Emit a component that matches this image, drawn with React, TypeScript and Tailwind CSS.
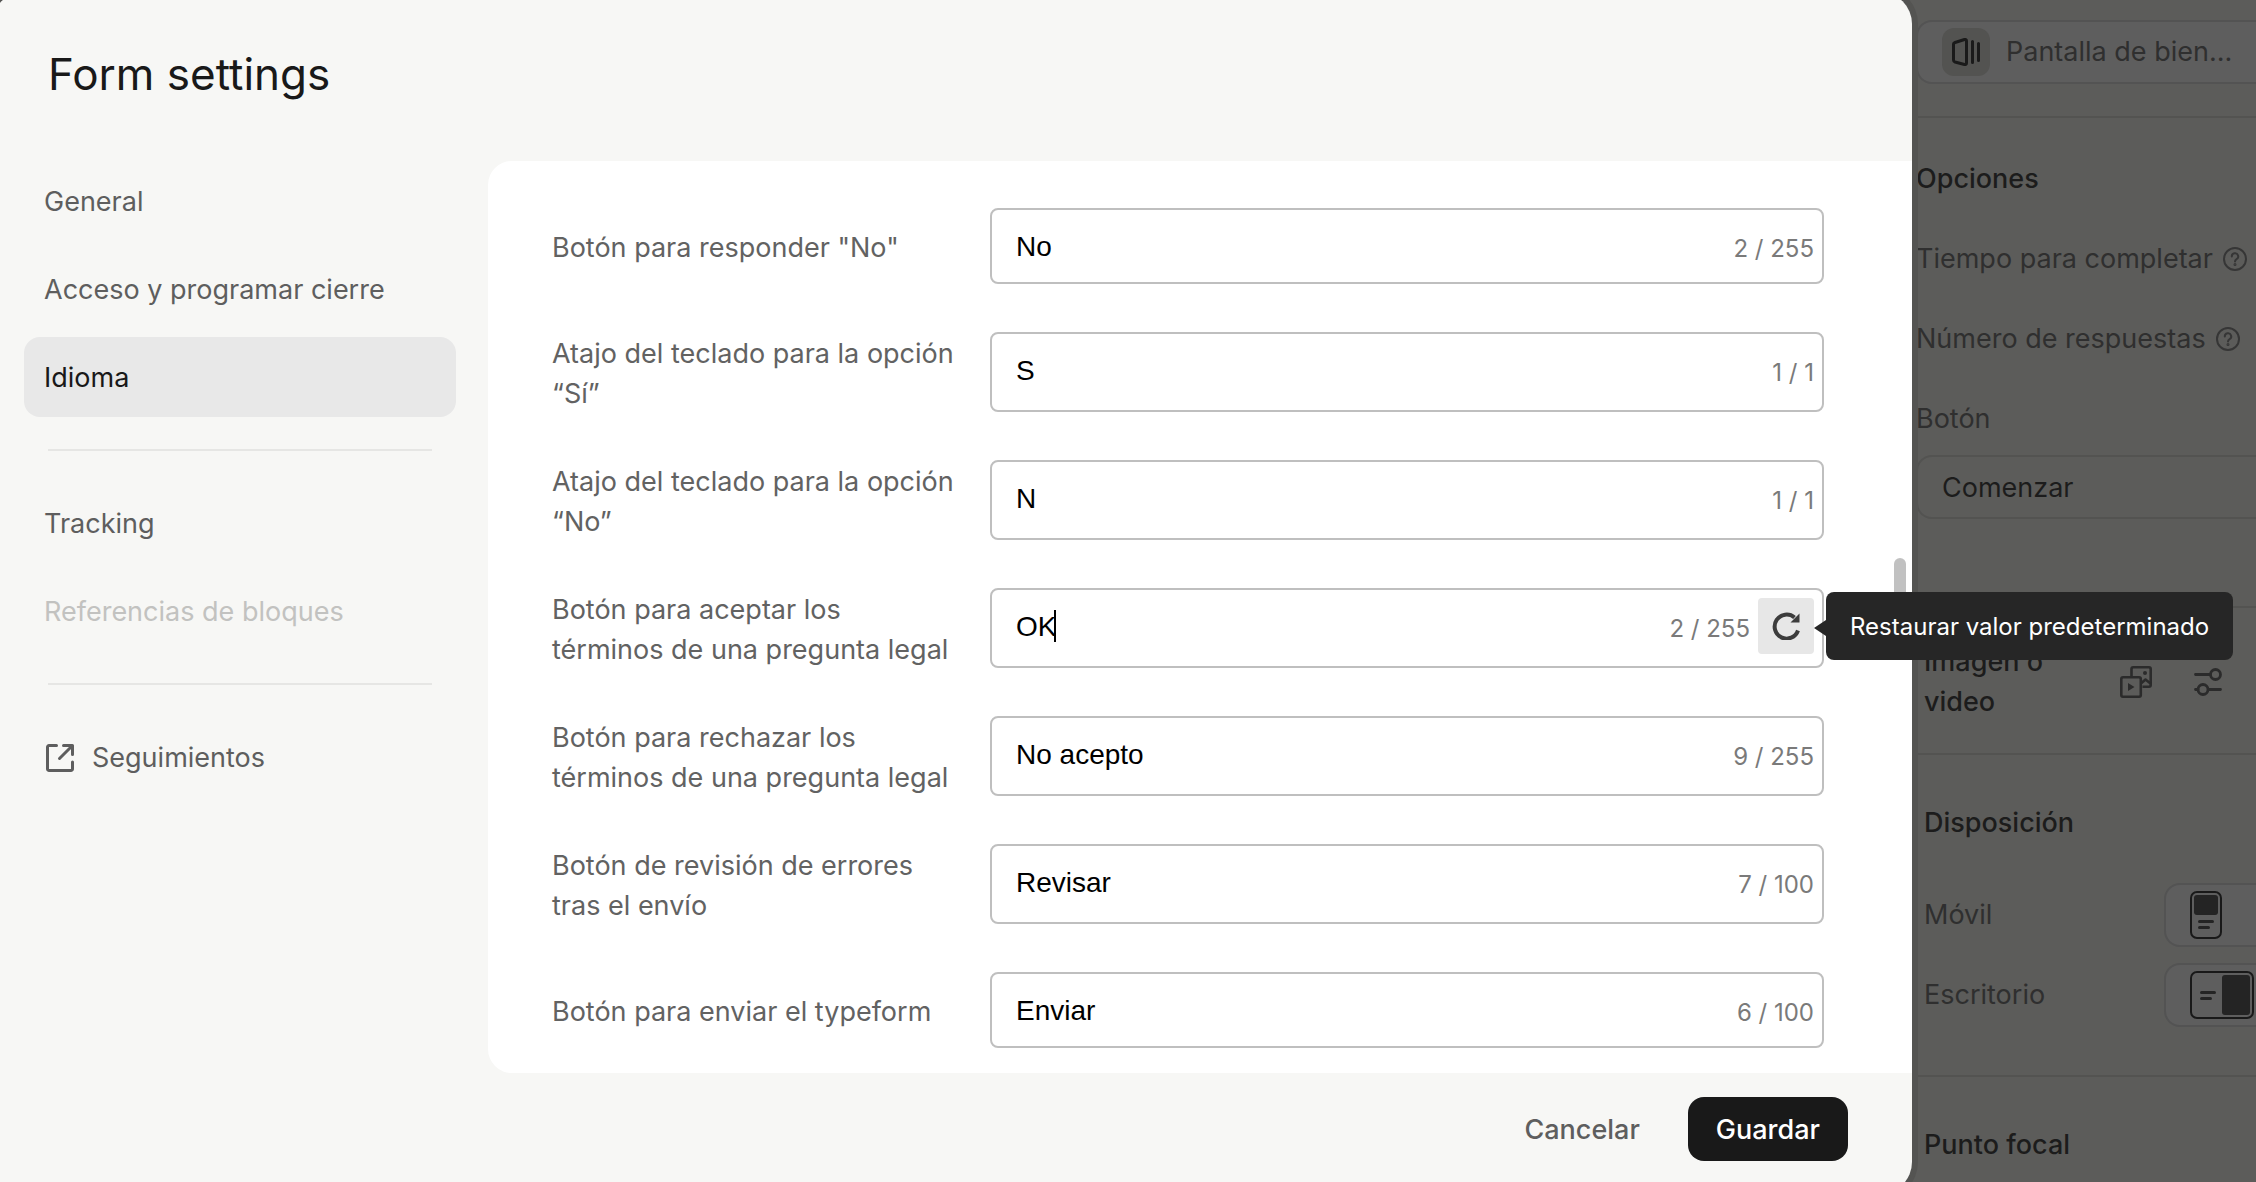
import { useState } from "react"
import type { ReactNode } from "react"

interface Field {
  id: string
  label: string
  value: string
  max: number
  active?: boolean
}

const fields: Field[] = [
  { id: "no", label: 'Botón para responder "No"', value: "No", max: 255 },
  { id: "key-yes", label: "Atajo del teclado para la opción “Sí”", value: "S", max: 1 },
  { id: "key-no", label: "Atajo del teclado para la opción “No”", value: "N", max: 1 },
  {
    id: "legal-accept",
    label: "Botón para aceptar los términos de una pregunta legal",
    value: "OK",
    max: 255,
    active: true,
  },
  {
    id: "legal-reject",
    label: "Botón para rechazar los términos de una pregunta legal",
    value: "No acepto",
    max: 255,
  },
  { id: "review", label: "Botón de revisión de errores tras el envío", value: "Revisar", max: 100 },
  { id: "submit", label: "Botón para enviar el typeform", value: "Enviar", max: 100 },
]

function ExternalIcon() {
  return (
    <svg className="size-8" viewBox="-2 -2 32 32" fill="none" stroke="currentColor" strokeWidth="3" strokeLinecap="round" strokeLinejoin="round">
      <path d="M10.5 1.5H3A1.5 1.5 0 0 0 1.5 3v22A1.5 1.5 0 0 0 3 26.5h22a1.5 1.5 0 0 0 1.5-1.5v-7" />
      <path d="M17.5 1.5h9v9M26 2L13.5 14.5" />
    </svg>
  )
}

function ReloadIcon() {
  return (
    <svg className="size-7" viewBox="0 0 28 28" fill="none">
      <path d="M26 18.500A12 12 0 1 1 22.500 5.500" stroke="#3c3c3c" strokeWidth="4" />
      <path d="M27.500 1.500V10.500H18.500Z" fill="#3c3c3c" />
    </svg>
  )
}

function WelcomeIcon() {
  return (
    <svg className="size-7" viewBox="0 0 28 28" fill="none" stroke="#1a1a1a" strokeWidth="3" strokeLinecap="round" strokeLinejoin="round">
      <path d="M3 4.5L12.5 1.5Q14.5 1.2 14.5 3V25Q14.5 26.8 12.5 26.5L3 24Q1.5 23.5 1.5 22V6Q1.5 5 3 4.5Z" />
      <path d="M20.5 3.5v21M26.5 5.5v17" />
    </svg>
  )
}

function HelpIcon() {
  return (
    <svg className="size-6" viewBox="0 0 24 24" fill="none" stroke="#363636" strokeWidth="2" strokeLinecap="round">
      <circle cx="12" cy="12" r="11" />
      <path d="M8.8 9.5a3.2 3.2 0 1 1 4.8 2.7c-1 .6-1.6 1.1-1.6 2.3" />
      <circle cx="12" cy="17.5" r="0.5" fill="#363636" />
    </svg>
  )
}

function MediaIcon() {
  return (
    <svg className="size-8" viewBox="0 0 32 32" fill="none" stroke="#2b2b2b" strokeWidth="2.6" strokeLinejoin="round">
      <path d="M11.5 10V3A1.7 1.7 0 0 1 13.2 1.3H29A1.7 1.7 0 0 1 30.7 3V19A1.7 1.7 0 0 1 29 20.7H22.500" />
      <path d="M21.5 17L25.5 13.5L30.5 17.5" />
      <circle cx="25" cy="7" r="2" fill="#2b2b2b" stroke="none" />
      <rect x="1.3" y="11.3" width="19.5" height="19.4" rx="1.7" />
      <path d="M8 17V25L14.5 21Z" fill="#2b2b2b" stroke="none" />
    </svg>
  )
}

function SlidersIcon() {
  return (
    <svg className="size-7" viewBox="0 0 28 28" fill="none" stroke="#2b2b2b" strokeWidth="2.8" strokeLinecap="round">
      <path d="M1.5 6.5H16M1.5 21.5H4M14.5 21.5H26.5" />
      <circle cx="21.5" cy="6.5" r="5" />
      <circle cx="9" cy="21.5" r="5" />
    </svg>
  )
}

function MobileLayoutIcon() {
  return (
    <svg className="h-12 w-8" viewBox="0 0 32 48" fill="none">
      <rect x="1" y="1" width="30" height="46" rx="6" stroke="#191919" strokeWidth="2" />
      <rect x="4" y="4" width="24" height="20" rx="3" fill="#242424" />
      <path d="M9.5 30.5h13M9.5 36.5h9" stroke="#242424" strokeWidth="3" strokeLinecap="round" />
    </svg>
  )
}

function DesktopLayoutIcon() {
  return (
    <svg className="h-12 w-16" viewBox="0 0 64 48" fill="none">
      <rect x="1" y="1" width="62" height="46" rx="6" stroke="#191919" strokeWidth="2" />
      <rect x="32" y="4" width="28" height="40" rx="3" fill="#242424" />
      <path d="M11.5 21.5h13M11.5 27.5h9" stroke="#242424" strokeWidth="3" strokeLinecap="round" />
    </svg>
  )
}

function NavItem({ children, className = "text-[#5e5e5e]" }: { children: ReactNode; className?: string }) {
  return (
    <a href="#" className={`flex h-20 items-center gap-4 rounded-2xl px-5 pt-0.5 ${className}`}>
      {children}
    </a>
  )
}

function FieldRow({ field }: { field: Field }) {
  const [value, setValue] = useState(field.value)

  return (
    <div className="flex items-stretch">
      <label htmlFor={field.id} className="mr-[34px] flex w-[404px] shrink-0 items-center pt-0.5 -mb-0.5 text-[#626262]">
        <span>{field.label}</span>
      </label>
      <div className="relative flex min-h-[76px] flex-1 items-start rounded-lg border-2 border-[#bfbfbf] pr-2 pl-6">
        <input
          id={field.id}
          value={value}
          maxLength={field.max}
          onChange={(e) => setValue(e.target.value)}
          className={`h-[72px] min-w-0 bg-transparent pt-0.5 font-['Liberation_Sans',sans-serif] text-[28px] text-black outline-none ${
            field.active ? "field-sizing-content" : "flex-1"
          }`}
        />
        {field.active && <span className="mt-5 -ml-0.5 h-8 w-0.5 bg-black" />}
        <span className="ml-auto flex h-[72px] items-center pt-1.5 text-2xl text-[#7a7a7a]">
          {field.value.length} / {field.max}
        </span>
        {field.active && (
          <>
            <button
              type="button"
              aria-label="Restaurar"
              onClick={() => setValue(field.value)}
              className="mt-2 ml-2 flex size-14 items-center justify-center rounded-sm bg-[#e7e7e7]"
            >
              <ReloadIcon />
            </button>
            <div
              role="tooltip"
              className="absolute top-0.5 left-full z-10 ml-1 flex h-[68px] items-center rounded-lg bg-[#262626] px-6 pt-0.5 text-2xl whitespace-nowrap text-white"
            >
              <svg className="absolute top-[26px] right-full h-5 w-3" viewBox="0 0 12 20">
                <path d="M12 2V18L0 10Z" fill="#262626" />
              </svg>
              Restaurar valor predeterminado
            </div>
          </>
        )}
      </div>
    </div>
  )
}

function SettingsDialog() {
  return (
    <section
      role="dialog"
      aria-labelledby="dialog-title"
      className="relative z-10 -mt-2 -mb-3 -ml-2 flex min-w-0 flex-1 flex-col rounded-[32px] bg-[#f7f7f5] shadow-[0_0_0_6px_#545452]"
    >
      <header className="flex h-[169px] shrink-0 items-start px-14 pt-[50px]">
        <h1 id="dialog-title" className="text-[44px] leading-[64px] text-[#191919]">
          Form settings
        </h1>
      </header>
      <div className="flex min-h-0 flex-1">
        <nav className="flex w-[496px] shrink-0 flex-col gap-2 pr-8 pl-8">
          <NavItem>General</NavItem>
          <NavItem>Acceso y programar cierre</NavItem>
          <NavItem className="bg-[#e8e8e8] text-[#191919]">Idioma</NavItem>
          <hr className="mx-6 my-6 border-t-2 border-[#e6e6e4]" />
          <NavItem>Tracking</NavItem>
          <NavItem className="text-[#c2c2c0]">Referencias de bloques</NavItem>
          <hr className="mx-6 my-6 border-t-2 border-[#e6e6e4]" />
          <NavItem>
            <ExternalIcon />
            Seguimientos
          </NavItem>
        </nav>
        <main className="relative flex-1 rounded-l-3xl bg-white">
          <form className="flex flex-col gap-12 pt-[47px] pr-[88px] pl-16">
            {fields.map((field) => (
              <FieldRow key={field.id} field={field} />
            ))}
          </form>
          <div className="absolute top-[397px] right-1.5 h-20 w-3 rounded-full bg-[#c1c1c1]" />
        </main>
      </div>
      <footer className="flex h-[121px] shrink-0 items-start justify-end gap-5 pt-6 pr-16 font-medium">
        <button className="h-16 px-7 pt-0.5 text-[#5e5e5e]">Cancelar</button>
        <button className="h-16 rounded-2xl bg-[#191919] px-7 pt-0.5 text-white">Guardar</button>
      </footer>
    </section>
  )
}

function DesignPanel() {
  return (
    <aside className="w-[344px] shrink-0 overflow-hidden pl-1 text-[#2f2f2f]">
      <div className="border-b-2 border-[#535351] pt-5 pb-8">
        <button className="flex h-16 w-[440px] items-center gap-4 rounded-2xl border-2 border-[#535353] bg-[#5e5e5e] px-6">
          <span className="flex size-12 items-center justify-center rounded-xl bg-[#535351]">
            <WelcomeIcon />
          </span>
          Pantalla de bien...
        </button>
      </div>
      <div className="flex flex-col gap-10 border-b-2 border-[#535351] pt-[41px] pb-[87px]">
        <h2 className="font-medium text-[#1c1c1c]">Opciones</h2>
        <div className="flex items-center gap-2.5">
          Tiempo para completar <HelpIcon />
        </div>
        <div className="flex items-center gap-2.5">
          Número de respuestas <HelpIcon />
        </div>
        <div>
          <label htmlFor="start-button">Botón</label>
          <input
            id="start-button"
            defaultValue="Comenzar"
            className="mt-4 block h-16 w-[440px] rounded-2xl border-2 border-[#535351] px-6 text-[#1c1c1c]"
          />
        </div>
      </div>
      <div className="flex items-center border-b-2 border-[#535351] pt-[34px] pb-[31px] pl-2">
        <h2 className="w-[196px] font-medium text-[#1c1c1c]">Imagen o video</h2>
        <button aria-label="Multimedia" className="mr-[42px]">
          <MediaIcon />
        </button>
        <button aria-label="Ajustes">
          <SlidersIcon />
        </button>
      </div>
      <div className="border-b-2 border-[#535351] pt-12 pb-12 pl-2">
        <h2 className="font-medium text-[#1c1c1c]">Disposición</h2>
        <div className="mt-10 flex items-center">
          <span className="w-60 shrink-0">Móvil</span>
          <button aria-label="Móvil" className="flex h-16 w-48 shrink-0 items-center rounded-2xl border-2 border-[#535353] bg-[#5e5e5e] px-6">
            <MobileLayoutIcon />
          </button>
        </div>
        <div className="mt-4 flex items-center">
          <span className="w-60 shrink-0">Escritorio</span>
          <button aria-label="Escritorio" className="flex h-16 w-48 shrink-0 items-center rounded-2xl border-2 border-[#535353] bg-[#5e5e5e] px-6">
            <DesktopLayoutIcon />
          </button>
        </div>
      </div>
      <h2 className="pt-12 pl-2 font-medium text-[#1c1c1c]">Punto focal</h2>
    </aside>
  )
}

export default function App() {
  return (
    <div className="flex h-screen overflow-hidden bg-[#5c5c5a] font-['Inter',sans-serif] text-[27px] leading-10">
      <SettingsDialog />
      <DesignPanel />
    </div>
  )
}
